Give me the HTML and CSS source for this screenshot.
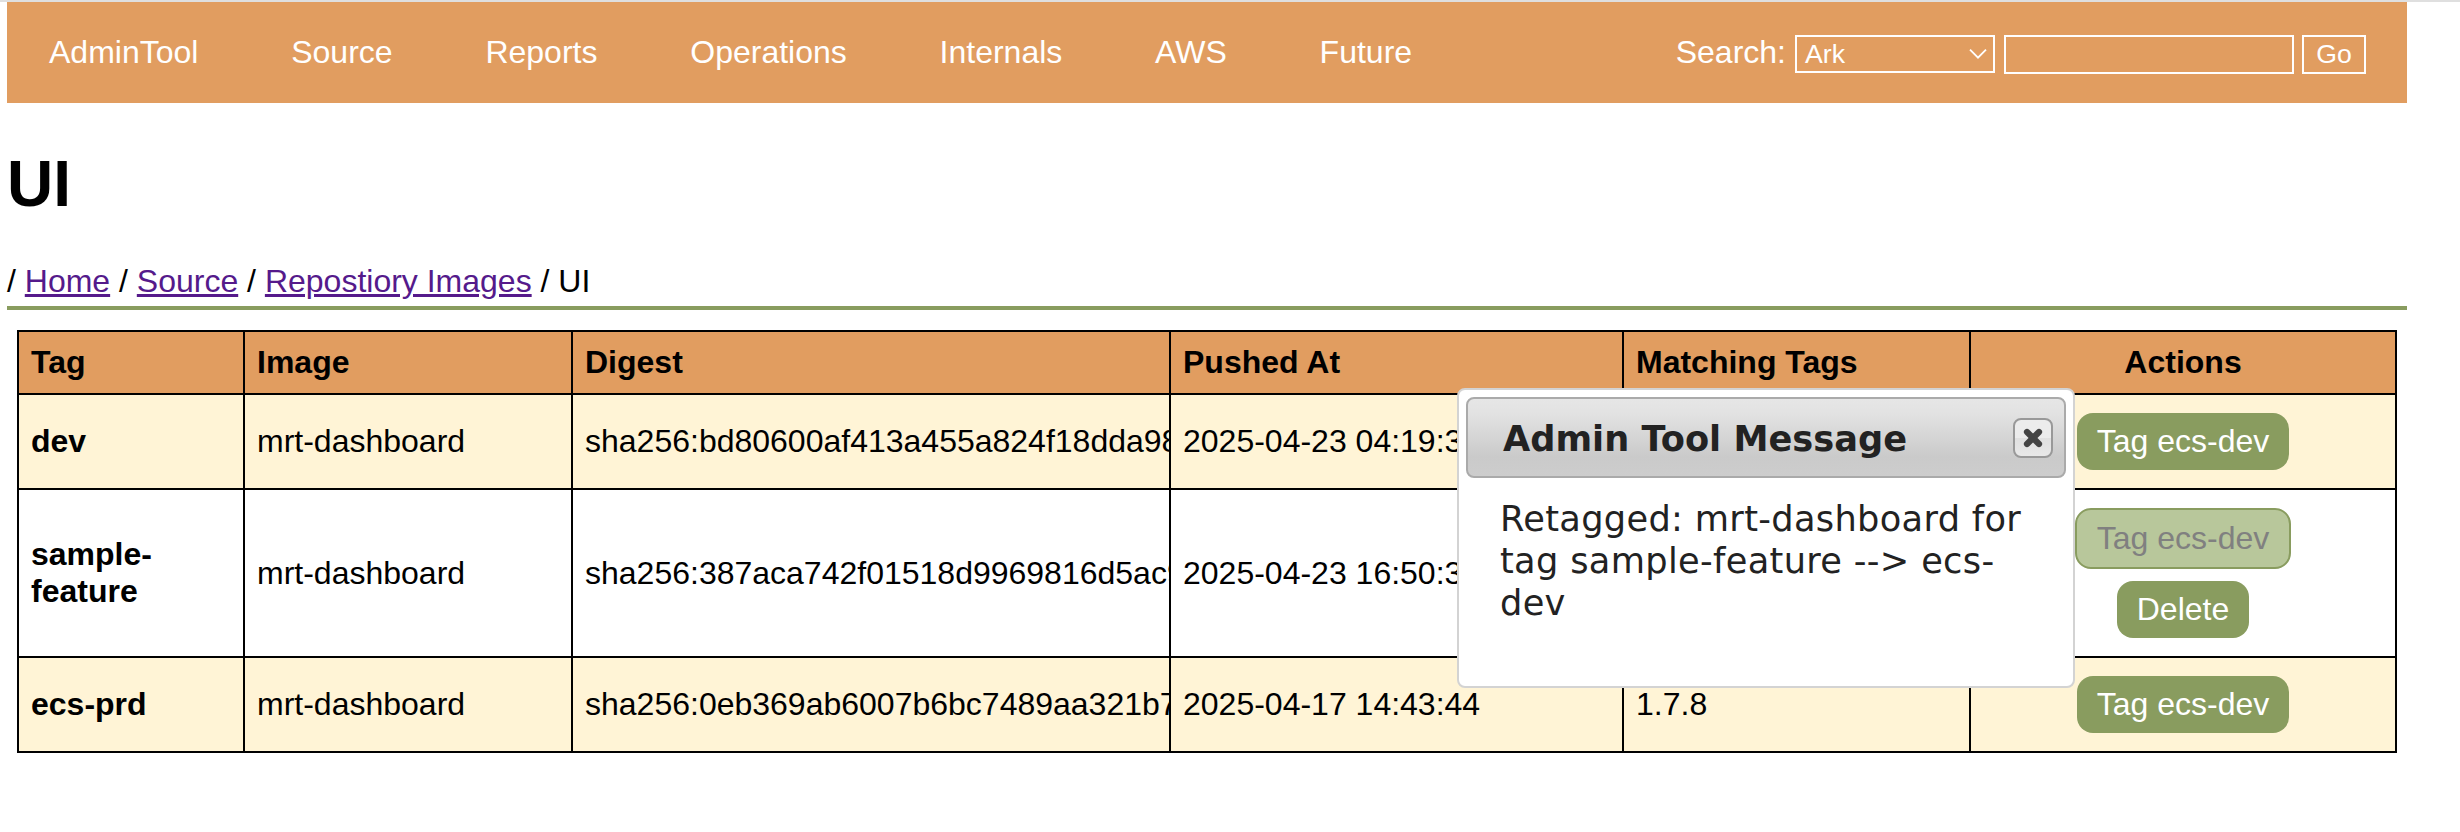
FILE: index.html
```html
<!DOCTYPE html>
<html lang="en">
<head>
<meta charset="utf-8">
<title>UI</title>
<link rel="stylesheet" href="styles.css">
</head>
<body>
<header class="nav">
  <nav class="menu">
    <a>AdminTool</a><a>Source</a><a>Reports</a><a>Operations</a><a>Internals</a><a>AWS</a><a>Future</a>
  </nav>
  <form class="search">
    <label class="search-label">Search:</label>
    <div class="field select"><span>Ark</span>
      <svg class="chevron" width="20" height="12" viewBox="0 0 20 12"><path d="M2 1.7 L10 9.7 L18 1.7" fill="none" stroke="#fff" stroke-width="1.8"/></svg>
    </div>
    <input class="field query" type="text" aria-label="Search">
    <button class="field go" type="button">Go</button>
  </form>
</header>
<main class="page">
  <h1 class="title">UI</h1>
  <div class="crumbs">/ <a href="#">Home</a> / <a href="#">Source</a> / <a href="#">Repostiory Images</a> / UI</div>
  <table class="images">
    <colgroup><col class="c-tag"><col class="c-image"><col class="c-digest"><col class="c-pushed"><col class="c-match"><col class="c-actions"></colgroup>
    <thead>
      <tr class="head"><th>Tag</th><th>Image</th><th>Digest</th><th>Pushed At</th><th>Matching Tags</th><th class="actions">Actions</th></tr>
    </thead>
    <tbody>
      <tr class="odd single"><th>dev</th><td>mrt-dashboard</td><td class="digest">sha256:bd80600af413a455a824f18dda98</td><td>2025-04-23 04:19:3</td><td></td>
        <td class="actions"><div class="buttons"><button class="btn">Tag ecs-dev</button></div></td></tr>
      <tr class="double"><th>sample-feature</th><td>mrt-dashboard</td><td class="digest">sha256:387aca742f01518d9969816d5ac9</td><td>2025-04-23 16:50:3</td><td></td>
        <td class="actions"><div class="buttons"><button class="btn off" disabled>Tag ecs-dev</button><button class="btn">Delete</button></div></td></tr>
      <tr class="odd single"><th>ecs-prd</th><td>mrt-dashboard</td><td class="digest">sha256:0eb369ab6007b6bc7489aa321b7</td><td>2025-04-17 14:43:44</td><td>1.7.8</td>
        <td class="actions"><div class="buttons"><button class="btn">Tag ecs-dev</button></div></td></tr>
    </tbody>
  </table>
</main>
<section class="dialog" role="dialog">
  <div class="dialog-bar">
    <span class="dialog-title">Admin Tool Message</span>
    <button class="close" aria-label="Close"><svg width="20" height="20" viewBox="0 0 20 20"><path d="M4 4 L16 16 M16 4 L4 16" stroke="#444" stroke-width="6.2" stroke-linecap="round"/></svg></button>
  </div>
  <p class="dialog-text">Retagged: mrt-dashboard for<br>tag sample-feature --&gt; ecs-<br>dev</p>
</section>
</body>
</html>
```

FILE: styles.css
```css
* { box-sizing: border-box; }
body {
  margin: 0;
  height: 832px;
  overflow: hidden;
  border-top: 2px solid #dfdfdf;
  background: #fff;
  color: #000;
  font: 32px/37px "Liberation Sans", Arial, sans-serif;
}
.nav {
  display: flex;
  justify-content: space-between;
  align-items: flex-start;
  width: 2400px;
  height: 101px;
  margin-left: 7px;
  padding: 32px 41px 0 42px;
  background: #e19d60;
  color: #fff;
}
.menu { display: flex; gap: 92.8px; }
.search { display: flex; align-items: flex-start; margin: 0; }
.search-label { margin-right: 9px; }
.field {
  height: 39px;
  margin-top: 1px;
  padding: 0;
  border: 2px solid #fff;
  border-radius: 0;
  background: transparent;
  color: #fff;
  font: 26.67px/35px "Liberation Sans", Arial, sans-serif;
}
.select {
  display: flex;
  justify-content: space-between;
  align-items: center;
  width: 200px;
  height: 38px;
  padding: 0 5px 0 8px;
}
.query { width: 290px; margin-left: 9px; }
.go { width: 64px; margin-left: 8px; text-align: center; }
.page { width: 2400px; margin-left: 7px; }
.title {
  margin: 0;
  padding-top: 44px;
  font-size: 64px;
  line-height: 74px;
}
.crumbs {
  height: 89px;
  padding-top: 42px;
  border-bottom: 4px solid #899c5f;
}
.crumbs a { color: #551a8b; }
.images {
  width: 2380px;
  margin: 20px 0 0 10px;
  border-collapse: collapse;
  table-layout: fixed;
}
.c-tag { width: 226px; }
.c-image { width: 328px; }
.c-digest { width: 598px; }
.c-pushed { width: 453px; }
.c-match { width: 347px; }
.c-actions { width: 426px; }
.images th, .images td {
  padding: 0 12px;
  border: 2px solid #000;
  text-align: left;
  vertical-align: middle;
}
.images .actions { text-align: center; }
.images .digest { overflow: hidden; white-space: nowrap; padding-right: 0; }
.head { height: 63px; background: #e19d60; }
.single { height: 95px; }
.double { height: 168px; }
.odd { background: #fff4d6; }
.buttons { display: flex; flex-direction: column; align-items: center; gap: 12px; }
.btn {
  height: 57px;
  padding: 10px 20px;
  border: 0;
  border-radius: 16px;
  background: #899c5f;
  color: #fff;
  font: 32px/37px "Liberation Sans", Arial, sans-serif;
}
.btn.off {
  height: 61px;
  border: 2px solid #899c5f;
  background: #b8c79b;
  color: #808080;
}
.dialog {
  position: absolute;
  left: 1457px;
  top: 388px;
  width: 618px;
  height: 300px;
  padding: 7px;
  border: 2px solid #d3d3d3;
  border-radius: 8px;
  background: #fff;
  color: #222;
  font: 35.2px/42px Verdana, "DejaVu Sans", sans-serif;
}
.dialog-bar {
  display: flex;
  justify-content: space-between;
  align-items: center;
  height: 81px;
  padding: 1px 11px 0 35px;
  border: 2px solid #aaa;
  border-radius: 8px;
  background: linear-gradient(#e6e6e6 0%, #e2e2e2 20%, #cacaca 75%, #cdcdcd 100%);
}
.dialog-title { padding-top: 2px; font-weight: bold; white-space: nowrap; }
.close {
  display: flex;
  align-items: center;
  justify-content: center;
  width: 40px;
  height: 40px;
  padding: 0;
  border: 2px solid #999;
  border-radius: 8px;
  background: linear-gradient(#ececec 50%, #e0e0e0 50%, #e8e8e8);
}
.dialog-text { margin: 20px 0 0 34px; letter-spacing: 0.32px; white-space: nowrap; }
```
